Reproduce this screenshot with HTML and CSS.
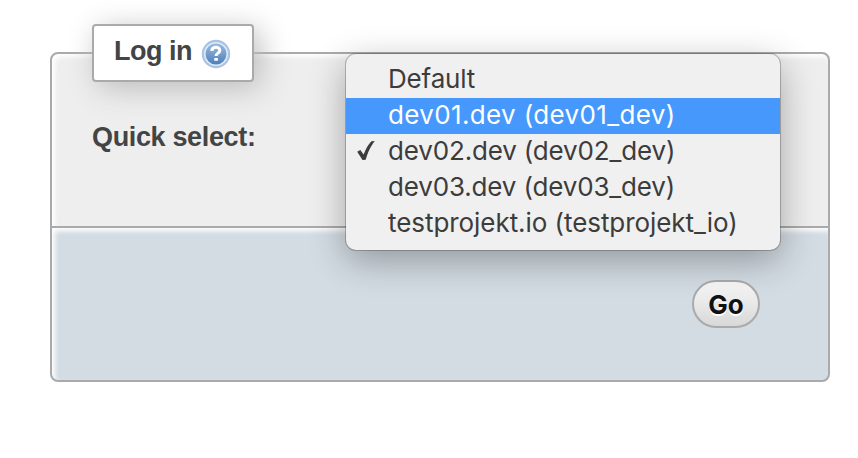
FILE: index.html
```html
<!DOCTYPE html>
<html lang="en">
<head>
<meta charset="utf-8">
<title>Log in</title>
<link rel="stylesheet" href="styles.css">
</head>
<body>
<form class="login">
  <section class="panel fields">
    <div class="legend">
      <span class="legend-text">Log in</span>
      <svg class="help" viewBox="0 0 30 30" aria-hidden="true">
        <defs>
          <linearGradient id="ball" x1="0" y1="0" x2="0" y2="1">
            <stop offset="0" stop-color="#9dbde0"/>
            <stop offset="1" stop-color="#4b7db9"/>
          </linearGradient>
        </defs>
        <circle cx="15" cy="15" r="14.2" fill="#a9c4e2"/>
        <circle cx="15" cy="15" r="11.3" fill="url(#ball)" stroke="#dce9f7" stroke-width="1.6"/>
        <path d="M10.800 12c0-5 8-5 8-.6 0 2.800-3.800 2.700-3.800 5.600" fill="none" stroke="#fff" stroke-width="3"/>
        <rect x="13.200" y="19" width="3.800" height="2.800" rx=".8" fill="#fff"/>
      </svg>
    </div>
    <label class="label">Quick select:</label>
    <ul class="menu">
      <li class="option"><span class="name default">Default</span></li>
      <li class="option active"><span class="name one">dev01.dev (dev01_dev)</span></li>
      <li class="option">
        <svg class="check" viewBox="0 0 20 22" aria-hidden="true"><path d="M1.200 11.800 4.300 10 7.600 14.600C9.800 8.800 12.500 4 15.500 1.200L18.800 1C14.500 6.500 12 12 9.700 19.800L6.500 20Z" fill="#3c3c3c"/></svg>
        <span class="name">dev02.dev (dev02_dev)</span>
      </li>
      <li class="option"><span class="name">dev03.dev (dev03_dev)</span></li>
      <li class="option"><span class="name long">testprojekt.io (testprojekt_io)</span></li>
    </ul>
  </section>
  <section class="panel actions">
    <button class="go" type="button">Go</button>
  </section>
</form>
</body>
</html>
```
FILE: styles.css
```css
* { box-sizing: border-box; }

body {
  margin: 0;
  background: #fff;
  color: #444;
  font-family: "Liberation Sans", Arial, sans-serif;
  overflow: hidden;
}

.login {
  width: 780px;
  margin: 52px 0 0 50px;
}

.panel {
  position: relative;
  border: 2px solid #aaa;
}

.fields {
  height: 176px;
  padding: 68px 40px 0;
  border-radius: 8px 8px 0 0;
  background: #eee;
  box-shadow: inset 3px 3px 5px #fff;
  z-index: 1;
}

.actions {
  display: flex;
  justify-content: flex-end;
  align-items: flex-start;
  height: 156px;
  margin-top: -2px;
  padding: 52px 68px 0;
  border-radius: 0 0 8px 8px;
  background: #d3dce3;
  box-shadow: inset 3px 3px 5px #fff;
}

.legend {
  position: absolute;
  left: 40px;
  top: -30px;
  display: flex;
  align-items: flex-start;
  width: 162px;
  height: 58px;
  padding: 10px 20px;
  border: 2px solid #aaa;
  border-radius: 4px;
  background: #fff;
  box-shadow: 6px 6px 30px #bbb;
}

.legend-text,
.label {
  font-size: 27px;
  font-weight: bold;
  line-height: 30px;
  letter-spacing: -.35px;
  white-space: nowrap;
}

.legend-text {
  width: 87px;
  letter-spacing: -.5px;
}

.help {
  width: 30px;
  height: 30px;
  margin-top: 3px;
}

.label { display: block; }

.menu {
  position: absolute;
  left: 294px;
  top: 0;
  width: 434px;
  height: 196px;
  margin: 0;
  padding: 8px 0;
  list-style: none;
  border-radius: 10px;
  background: #f0f0f0;
  box-shadow: 0 0 0 1px rgba(0, 0, 0, .22), 0 10px 36px rgba(0, 0, 0, .32);
  color: #3c3c3c;
  font: 26px/34px Inter, sans-serif;
}

.option {
  position: relative;
  height: 36px;
  padding-left: 42px;
  letter-spacing: -.16px;
  white-space: nowrap;
}

.option.active {
  background: #4698fc;
  color: #fff;
}

.one { letter-spacing: .36px; }

.long { letter-spacing: -.06px; }

.check {
  position: absolute;
  left: 10px;
  top: 6px;
  width: 20px;
  height: 22px;
}

.go {
  width: 68px;
  height: 48px;
  padding: 2px 0 0;
  border: 2px solid #aaa;
  border-radius: 24px;
  background: linear-gradient(#f8f8f8, #d8d8d8);
  color: #111;
  font: bold 26px/42px Inter, sans-serif;
  text-shadow: 0 2px 0 #fff;
}
```
